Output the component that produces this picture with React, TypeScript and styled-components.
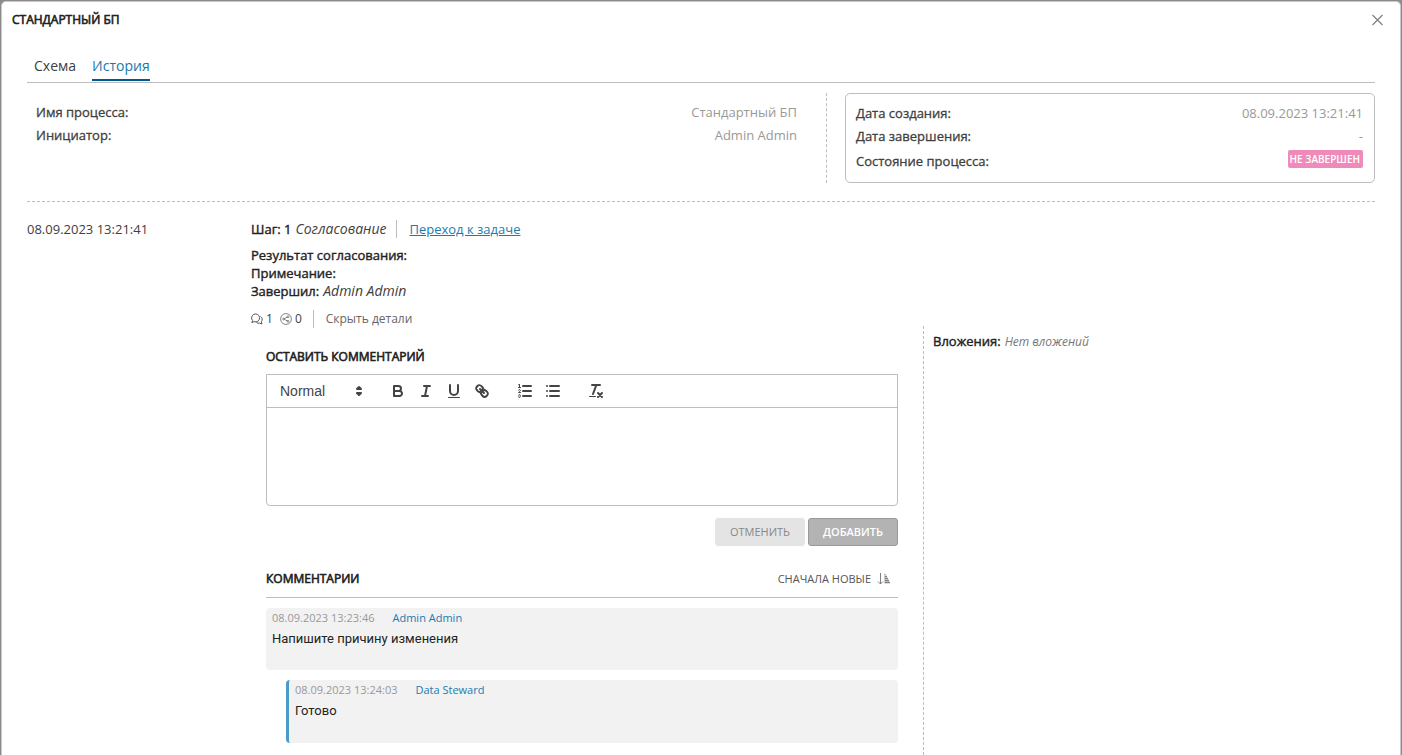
import React from 'react';
import styled, { createGlobalStyle, css } from 'styled-components';

const GlobalStyle = createGlobalStyle`
  *, *::before, *::after { box-sizing: border-box; }
  body {
    margin: 0;
    background: #8b8b8b;
    font-family: 'Open Sans', 'Noto Sans', sans-serif;
    font-size: 13px;
    line-height: 18px;
    color: #404040;
  }
  button, select, textarea { font: inherit; color: inherit; }
`;

const Dialog = styled.section`
  margin: 1px 1px 0;
  min-height: calc(100vh - 1px);
  background: #fff;
  border: 1px solid #c8c8c8;
  border-bottom: 0;
  border-radius: 5px 5px 0 0;
`;

const DialogHeader = styled.header`
  display: flex;
  align-items: center;
  justify-content: space-between;
  height: 36px;
  padding: 0 16px 0 10px;
`;

const Heading = styled.h2`
  margin: 0;
  font-family: 'Open Sans', sans-serif;
  font-size: 12px;
  line-height: 18px;
  font-weight: 400;
  -webkit-text-stroke: 0.6px currentColor;
  color: #222;
  text-transform: uppercase;
`;

const PlainButton = styled.button`
  display: inline-flex;
  align-items: center;
  padding: 0;
  border: 0;
  background: none;
  cursor: pointer;
`;

const DialogBody = styled.div`
  padding: 18px 25px 0;
`;

const Tabs = styled.nav`
  display: flex;
  gap: 16px;
  height: 27px;
  padding-left: 7px;
  border-bottom: 1px solid #bdbdbd;
`;

const Tab = styled.button<{ $active?: boolean }>`
  height: 25px;
  padding: 0 0 3px;
  border: 0;
  border-bottom: 2px solid ${p => (p.$active ? '#005b8c' : 'transparent')};
  background: none;
  font-size: 14px;
  line-height: 20px;
  color: ${p => (p.$active ? '#1679ab' : '#404040')};
  cursor: pointer;
`;

const Summary = styled.div`
  display: grid;
  grid-template-columns: minmax(0, 800fr) minmax(0, 530fr);
  gap: 18px;
  padding: 10px 0 18px;
  border-bottom: 1px dashed #bdbdbd;
`;

const FactList = styled.dl<{ $boxed?: boolean }>`
  display: flex;
  flex-direction: column;
  gap: 5px;
  margin: 0;
  height: 90px;
  ${p => p.$boxed
    ? css`
        padding: 10px 11px 10px 10px;
        border: 1px solid #bdbdbd;
        border-radius: 5px;
      `
    : css`
        padding: 10px 29px 10px 9px;
        border-right: 1px dashed #bdbdbd;
      `}
`;

const Fact = styled.div<{ $tall?: boolean }>`
  display: flex;
  align-items: ${p => (p.$tall ? 'flex-start' : 'center')};
  justify-content: space-between;
  min-height: ${p => (p.$tall ? 20 : 18)}px;
`;

const Label = styled.dt`
  align-self: flex-end;
  -webkit-text-stroke: 0.3px currentColor;
`;

const Value = styled.dd`
  margin: 0;
  color: #999;
`;

const StatusBadge = styled.span`
  display: block;
  padding: 0 3px 0 2px;
  border-radius: 2px;
  background: #ef8bba;
  color: #fff;
  font-size: 10px;
  font-weight: 600;
`;

const Step = styled.article`
  display: grid;
  grid-template-columns: 224px minmax(0, 1fr);
  padding-top: 18px;
`;

const StepTitle = styled.div`
  display: flex;
  align-items: center;
`;

const Strong = styled.b`
  margin-right: 4px;
  font-weight: 400;
  color: #222;
  -webkit-text-stroke: 0.4px currentColor;
`;

const Emphasis = styled.i`
  font-size: 14px;
`;

const Separator = styled.span<{ $gap: number }>`
  width: 1px;
  height: 18px;
  margin: 0 12px 0 ${p => p.$gap}px;
  background: #bdbdbd;
`;

const TaskLink = styled.a`
  color: #1a7bb0;
`;

const Result = styled.div`
  margin-top: 8px;
`;

const ResultLine = styled.div`
  display: flex;
  align-items: baseline;
  height: 18px;
`;

const Counters = styled.div`
  display: flex;
  align-items: center;
  margin-top: 10px;
  font-size: 12px;
`;

const Counter = styled.span`
  display: inline-flex;
  align-items: center;
  gap: 3px;
  margin-right: 7px;
`;

const DetailsToggle = styled(PlainButton)`
  color: #666;
`;

const Details = styled.div`
  display: grid;
  grid-template-columns: minmax(0, 672fr) minmax(0, 452fr);
`;

const Discussion = styled.div`
  padding: 20px 25px 12px 15px;
`;

const Attachments = styled.aside`
  margin-top: -2px;
  padding: 6px 9px;
  border-left: 1px dashed #bdbdbd;
`;

const Empty = styled.i`
  font-size: 12px;
  color: #777;
`;

const Editor = styled.div`
  margin-top: 8px;
  border: 1px solid #bdbdbd;
  border-radius: 0 0 4px 4px;
`;

const Toolbar = styled.div`
  display: flex;
  align-items: center;
  height: 33px;
  padding: 0 8px 0 5px;
  border-bottom: 1px solid #bdbdbd;
`;

const ToolGroup = styled.div`
  display: flex;
  margin-right: 15px;
`;

const Tool = styled(PlainButton)`
  width: 28px;
  height: 24px;
  justify-content: center;
`;

const FormatPicker = styled.div`
  display: flex;
  position: relative;
  width: 96px;
  height: 24px;
  margin-right: 16px;

  svg {
    position: absolute;
    right: 0;
    top: 3px;
    pointer-events: none;
  }
`;

const FormatSelect = styled.select`
  appearance: none;
  width: 100%;
  padding: 0 8px;
  border: 0;
  background: none;
  font-family: 'Liberation Sans', Arial, sans-serif;
  font-size: 14px;
  color: #444;
`;

const EditorArea = styled.textarea`
  display: block;
  width: 100%;
  height: 97px;
  padding: 12px 15px;
  border: 0;
  background: none;
  resize: none;
`;

const Actions = styled.div`
  display: flex;
  justify-content: flex-end;
  gap: 3px;
  margin: 12px 0 24px;
`;

const ActionButton = styled.button<{ $primary?: boolean }>`
  height: 28px;
  padding: 0 14px;
  border: 1px solid ${p => (p.$primary ? '#999' : '#e4e4e4')};
  border-radius: 3px;
  background: ${p => (p.$primary ? '#b3b3b3' : '#e4e4e4')};
  color: ${p => (p.$primary ? '#fff' : '#888')};
  font-size: 11px;
  font-weight: ${p => (p.$primary ? 600 : 400)};
  text-transform: uppercase;
`;

const CommentsHeader = styled.div`
  display: flex;
  align-items: center;
  justify-content: space-between;
  height: 28px;
  padding: 0 7px 9px 0;
  border-bottom: 1px solid #bdbdbd;
`;

const SortButton = styled(PlainButton)`
  gap: 6px;
  font-size: 11px;
  color: #555;
  text-transform: uppercase;
`;

const CommentList = styled.div`
  display: flex;
  flex-direction: column;
  gap: 10px;
  margin-top: 10px;
`;

const CommentCard = styled.article<{ $reply?: boolean }>`
  height: ${p => (p.$reply ? 63 : 62)}px;
  margin-left: ${p => (p.$reply ? 20 : 0)}px;
  padding: 1px 6px;
  border-left: ${p => (p.$reply ? '3px solid #4a9bc7' : '0')};
  border-radius: 4px;
  background: #f2f2f2;
`;

const CommentMeta = styled.div`
  display: flex;
  gap: 18px;
  font-size: 11px;
  color: #999;
`;

const Author = styled.span`
  color: #1a7bb0;
`;

const CommentText = styled.p`
  margin: 2px 0 0;
  font-family: Roboto, sans-serif;
  font-size: 13px;
  line-height: 20px;
  color: #222;
`;

const QuillSvg = styled.svg.attrs({ width: 18, height: 18, viewBox: '0 0 18 18', 'aria-hidden': true })`
  fill: none;
  stroke: #444;
  stroke-width: 2;
  stroke-linecap: round;
  stroke-linejoin: round;

  .fill { fill: #444; stroke: none; }
  .both { fill: #444; }
  .thin { stroke-width: 1; }
`;

const inlineTools = [
  {
    name: 'Полужирный',
    icon: (
      <>
        <path d="M5,4H9.5A2.5,2.5,0,0,1,12,6.5v0A2.5,2.5,0,0,1,9.5,9H5V4Z" />
        <path d="M5,9h5.5A2.5,2.5,0,0,1,13,11.5v0A2.5,2.5,0,0,1,10.5,14H5V9Z" />
      </>
    ),
  },
  {
    name: 'Курсив',
    icon: <path d="M7 4H13M5 14H11M8 14L10 4" />,
  },
  {
    name: 'Подчёркнутый',
    icon: (
      <>
        <path d="M5,3V9a4.012,4.012,0,0,0,4,4H9a4.012,4.012,0,0,0,4-4V3" />
        <rect className="fill" height="1" rx="0.5" width="12" x="3" y="15" />
      </>
    ),
  },
  {
    name: 'Ссылка',
    icon: (
      <>
        <path d="M7 7L11 11" />
        <path d="M8.9,4.577a3.476,3.476,0,0,1,.36,4.679A3.476,3.476,0,0,1,4.577,8.9C3.185,7.5,2.035,6.4,4.217,4.217S7.5,3.185,8.9,4.577Z" />
        <path d="M13.423,9.1a3.476,3.476,0,0,0-4.679-.36,3.476,3.476,0,0,0,.36,4.679c1.392,1.392,2.5,2.542,4.679.36S14.815,10.5,13.423,9.1Z" />
      </>
    ),
  },
];

const listTools = [
  {
    name: 'Нумерованный список',
    icon: (
      <>
        <path d="M7 4H15M7 9H15M7 14H15" />
        <path className="thin" d="M2.5 5.5H4.5" />
        <path className="fill" d="M3.5,6A0.5,0.5,0,0,1,3,5.5V3.085l-0.276.138A0.5,0.5,0,0,1,2.053,3c-0.124-.247-0.023-0.324.224-0.447l1-.5A0.5,0.5,0,0,1,4,2.5v3A0.5,0.5,0,0,1,3.5,6Z" />
        <path className="thin" d="M4.5,10.5h-2c0-.234,1.85-1.076,1.85-2.234A0.959,0.959,0,0,0,2.5,8.156" />
        <path className="thin" d="M2.5,14.846a0.959,0.959,0,0,0,1.85-.11A0.7,0.7,0,0,0,3.75,14a0.688,0.688,0,0,0,.6-0.736,0.959,0.959,0,0,0-1.85-.109" />
      </>
    ),
  },
  {
    name: 'Маркированный список',
    icon: <path d="M6 4H15M6 9H15M6 14H15M3 4H3M3 9H3M3 14H3" />,
  },
];

const cleanTools = [
  {
    name: 'Очистить форматирование',
    icon: (
      <>
        <path d="M5 3H13M6 12L9.35 3M11 11L15 15M15 11L11 15" />
        <rect className="fill" height="1" rx="0.5" width="7" x="2" y="14" />
      </>
    ),
  },
];

const CloseIcon = () => (
  <svg width="14" height="14" viewBox="0 0 14 14" fill="none" stroke="#808080" strokeWidth="1.2" aria-hidden="true">
    <path d="M2.5 2L12.5 12M12.5 2L2.5 12" />
  </svg>
);

const ChatIcon = () => (
  <svg width="12" height="12" viewBox="0 0 12 12" fill="none" stroke="#555" strokeLinejoin="round" aria-hidden="true">
    <path d="M0.8 9.6L1.6 7.6A4 4 0 1 1 4 8.9L2.8 8.7Z" />
    <path d="M9.6 3.4A3.6 3.6 0 0 1 10.4 8.6L10.9 11L8.6 10.2A3.8 3.8 0 0 1 5.4 9.4" />
  </svg>
);

const ShareIcon = () => (
  <svg width="12" height="12" viewBox="0 0 12 12" fill="none" stroke="#666" strokeWidth="0.8" aria-hidden="true">
    <circle cx="6" cy="6" r="5.4" />
    <path d="M8 3.7L3.6 6L8 8.3" />
    <circle cx="8" cy="3.7" r="0.9" fill="#fff" />
    <circle cx="3.6" cy="6" r="0.9" fill="#fff" />
    <circle cx="8" cy="8.3" r="0.9" fill="#fff" />
  </svg>
);

const SortIcon = () => (
  <svg width="14" height="14" viewBox="0 0 14 14" fill="none" stroke="#808080" aria-hidden="true">
    <path d="M3.5 1V12M1 9.5L3.5 12L6 9.5" />
    <path d="M7.5 2.5H8.5M7.5 4.5H10M7.5 6.5H11M7.5 8.5H12M7.5 10.5H13" strokeWidth="1.6" />
  </svg>
);

type ToolItem = { name: string; icon: React.ReactNode };

const Tools = ({ items }: { items: ToolItem[] }) => (
  <ToolGroup>
    {items.map(item => (
      <Tool key={item.name} type="button" aria-label={item.name}>
        <QuillSvg>{item.icon}</QuillSvg>
      </Tool>
    ))}
  </ToolGroup>
);

const comments = [
  { date: '08.09.2023 13:23:46', author: 'Admin Admin', text: 'Напишите причину изменения', reply: false },
  { date: '08.09.2023 13:24:03', author: 'Data Steward', text: 'Готово', reply: true },
];

export default function App() {
  return (
    <>
      <GlobalStyle />
      <Dialog role="dialog" aria-labelledby="dialog-title">
        <DialogHeader>
          <Heading id="dialog-title">Стандартный БП</Heading>
          <PlainButton type="button" aria-label="Закрыть">
            <CloseIcon />
          </PlainButton>
        </DialogHeader>
        <DialogBody>
          <Tabs>
            <Tab type="button">Схема</Tab>
            <Tab type="button" $active>История</Tab>
          </Tabs>
          <Summary>
            <FactList>
              <Fact><Label>Имя процесса:</Label><Value>Стандартный БП</Value></Fact>
              <Fact><Label>Инициатор:</Label><Value>Admin Admin</Value></Fact>
            </FactList>
            <FactList $boxed>
              <Fact><Label>Дата создания:</Label><Value>08.09.2023 13:21:41</Value></Fact>
              <Fact><Label>Дата завершения:</Label><Value>-</Value></Fact>
              <Fact $tall><Label>Состояние процесса:</Label><Value><StatusBadge>НЕ ЗАВЕРШЕН</StatusBadge></Value></Fact>
            </FactList>
          </Summary>
          <Step>
            <time>08.09.2023 13:21:41</time>
            <div>
              <StepTitle>
                <Strong>Шаг: 1</Strong>
                <Emphasis>Согласование</Emphasis>
                <Separator $gap={10} />
                <TaskLink href="#task">Переход к задаче</TaskLink>
              </StepTitle>
              <Result>
                <ResultLine><Strong>Результат согласования:</Strong></ResultLine>
                <ResultLine><Strong>Примечание:</Strong></ResultLine>
                <ResultLine><Strong>Завершил:</Strong><Emphasis>Admin Admin</Emphasis></ResultLine>
              </Result>
              <Counters>
                <Counter><ChatIcon />1</Counter>
                <Counter><ShareIcon />0</Counter>
                <Separator $gap={4} />
                <DetailsToggle type="button">Скрыть детали</DetailsToggle>
              </Counters>
              <Details>
                <Discussion>
                  <Heading>Оставить комментарий</Heading>
                  <Editor>
                    <Toolbar>
                      <FormatPicker>
                        <FormatSelect aria-label="Стиль текста" defaultValue="Normal">
                          <option>Normal</option>
                        </FormatSelect>
                        <QuillSvg>
                          <polygon className="both" points="7 11 9 13 11 11 7 11" />
                          <polygon className="both" points="7 7 9 5 11 7 7 7" />
                        </QuillSvg>
                      </FormatPicker>
                      <Tools items={inlineTools} />
                      <Tools items={listTools} />
                      <Tools items={cleanTools} />
                    </Toolbar>
                    <EditorArea aria-label="Текст комментария" />
                  </Editor>
                  <Actions>
                    <ActionButton type="button">Отменить</ActionButton>
                    <ActionButton type="button" $primary>Добавить</ActionButton>
                  </Actions>
                  <CommentsHeader>
                    <Heading>Комментарии</Heading>
                    <SortButton type="button">Сначала новые<SortIcon /></SortButton>
                  </CommentsHeader>
                  <CommentList>
                    {comments.map(comment => (
                      <CommentCard key={comment.date} $reply={comment.reply}>
                        <CommentMeta>
                          <time>{comment.date}</time>
                          <Author>{comment.author}</Author>
                        </CommentMeta>
                        <CommentText>{comment.text}</CommentText>
                      </CommentCard>
                    ))}
                  </CommentList>
                </Discussion>
                <Attachments>
                  <Strong>Вложения:</Strong>
                  <Empty>Нет вложений</Empty>
                </Attachments>
              </Details>
            </div>
          </Step>
        </DialogBody>
      </Dialog>
    </>
  );
}
